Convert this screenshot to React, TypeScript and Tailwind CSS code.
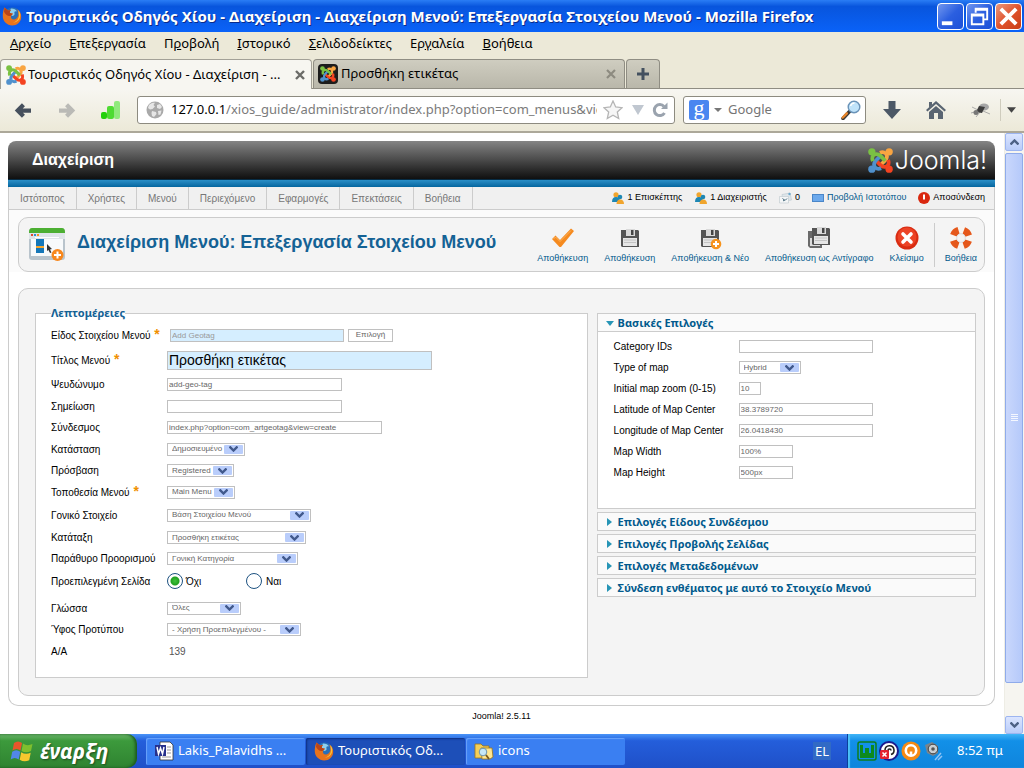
import { clsx } from 'clsx';
import type { ReactNode } from 'react';

type IconProps = { className?: string };

/* ---------- Icons ---------- */

function JoomlaMark({ className }: IconProps) {
  const arm = 'M4.6 12.600 C3.400 9.600 4.200 6.800 6.800 6 C9 5.400 10.600 6.200 12 7.600 L16.600 12.200';
  return (
    <svg viewBox="0 0 24 24" className={className} fill="none" strokeWidth="3.600" aria-hidden="true">
      <g stroke="#f9a541" fill="#f9a541" transform="rotate(90 12 12)">
        <path d={arm} fill="none" />
        <circle cx="3.700" cy="3.700" r="3.500" stroke="none" />
      </g>
      <g stroke="#f44321" fill="#f44321" transform="rotate(180 12 12)">
        <path d={arm} fill="none" />
        <circle cx="3.700" cy="3.700" r="3.500" stroke="none" />
      </g>
      <g stroke="#5091cd" fill="#5091cd" transform="rotate(270 12 12)">
        <path d={arm} fill="none" />
        <circle cx="3.700" cy="3.700" r="3.500" stroke="none" />
      </g>
      <g stroke="#7ac143" fill="#7ac143">
        <path d={arm} fill="none" />
        <circle cx="3.700" cy="3.700" r="3.500" stroke="none" />
      </g>
    </svg>
  );
}

function FirefoxIcon({ className }: IconProps) {
  return (
    <svg viewBox="0 0 20 20" className={className} aria-hidden="true">
      <circle cx="10.5" cy="9.5" r="8" fill="#2a6fb8" />
      <path d="M9 2.5c3 0 5 1 6 3-2-.6-3 .4-2.500 2 .4 1.300-.8 2.500-2.500 2.500L7 7z" fill="#8fd0ee" />
      <path
        d="M2.500 1.500 6 4.500l3-.6C8 5 7.600 6 8 7l3 .8-2 2c-.6 2.400 1 4 3.400 3.600 2.600-.4 4-2.600 4-5.400 0-2-.6-3.600-1.600-5 3 2 4.700 4.800 4.400 8.400-.4 4.700-4.200 8-9 8C5 19.400 1 15.600.8 10.600.7 7.400 1.200 4.200 2.500 1.500z"
        fill="#e8731c"
      />
      <path d="M2.500 1.500 6 4.500l3-.6C8 5 7.600 6 8 7l3 .8-2 2c-3 1-5.500-1-7-4z" fill="#b8441a" />
      <path d="M16.400 4c2 2.400 2.400 5.400 1.400 8-1.200 3-4 4.700-7 4.500 3.500-.6 6-3.200 6.200-7z" fill="#fbc63a" />
    </svg>
  );
}

function GlobeIcon({ className }: IconProps) {
  return (
    <svg viewBox="0 0 18 18" className={className} aria-hidden="true">
      <circle cx="9" cy="9" r="8.500" fill="#a9a9a9" />
      <path d="M3 4c2-2 4-2.500 6-2.200L7.500 4 9 5.500 6.500 8 4 8.500 2 7zM11 4l3-1 2 3-2 2-3-1zM6 10l4 1 .5 2L8 16l-2-1-.5-3zM12 10l3.500-.5-1 4-2 .5z" fill="#e6e6e6" />
    </svg>
  );
}

function Floppy({ className, badge, stacked }: IconProps & { badge?: boolean; stacked?: boolean }) {
  return (
    <svg viewBox="0 0 24 24" className={className} aria-hidden="true">
      {stacked && (
        <>
          <path d="M1 5h14v17H3l-2-2z" fill="#6a6a6a" />
          <path d="M3 12h10v8H3z" fill="#ddd" />
        </>
      )}
      <g transform={stacked ? 'translate(2 -2)' : undefined}>
        <path d="M3 4h17l1 1v16H4l-1-1z" fill="#555" />
        <path d="M8 3h9v7H8z" fill="#d9d9d9" />
        <path d="M13 4h2.500v5H13z" fill="#444" />
        <path d="M5 12h14v8H5z" fill="#e6e6e6" />
        <path d="M6 14h12M6 16.500h12" stroke="#c4c4c4" />
      </g>
      {badge && (
        <>
          <circle cx="18" cy="18" r="5.300" fill="#f7941d" />
          <path d="M18 15v6M15 18h6" stroke="#fff" strokeWidth="2" />
        </>
      )}
    </svg>
  );
}

function CheckIcon({ className }: IconProps) {
  return (
    <svg viewBox="0 0 24 24" className={className} aria-hidden="true">
      <path d="M1 13 4.500 9.500 9 14 20 2.500 23 5 10 21 8.500 21z" fill="#f58a1f" />
      <path d="M2.500 13 4.500 11 9 15.500 20 4.500" fill="none" stroke="#fbb35c" />
    </svg>
  );
}

function CloseIcon({ className }: IconProps) {
  return (
    <svg viewBox="0 0 24 24" className={className} aria-hidden="true">
      <circle cx="12" cy="12" r="11.500" fill="#d92c12" />
      <circle cx="12" cy="11" r="9.500" fill="#ec4326" />
      <path d="m8 8 8 8m0-8-8 8" stroke="#fff" strokeWidth="3.600" strokeLinecap="round" />
    </svg>
  );
}

function LifebuoyIcon({ className }: IconProps) {
  return (
    <svg viewBox="0 0 24 24" className={className} fill="none" aria-hidden="true">
      <circle cx="12" cy="12" r="8" stroke="#f8f4f0" strokeWidth="7" />
      <circle cx="12" cy="12" r="8" stroke="#e5581b" strokeWidth="7" strokeDasharray="7.200 5.366" transform="rotate(19 12 12)" />
      <circle cx="12" cy="12" r="4.300" fill="#f4f4f4" stroke="#ddd" />
    </svg>
  );
}

function MenuItemIcon({ className }: IconProps) {
  return (
    <svg viewBox="0 0 36 36" className={className} aria-hidden="true">
      <rect y="2" width="36" height="31" rx="3" fill="#b9c4cc" />
      <path d="M0 5q0-4 3-4h30q3 0 3 4v1H0z" fill="#4caf32" />
      <path d="M0 6h36v6H0z" fill="#dfe5e9" />
      <path d="M2 7h2v2H2z" fill="#e04a2f" />
      <path d="M5 7h2v2H5z" fill="#2f8fd0" />
      <path d="M8 7h2v2H8z" fill="#f7941d" />
      <path d="M6 10h24v1H6z" fill="#fff" />
      <path d="M2 12h32v17H2z" fill="#f8fafb" />
      <path d="M7 12h8v14H7z" fill="#1577b8" />
      <path d="M7 19h8v2H7z" fill="#f9a72b" />
      <path d="m18 17 5 5-2 .5 1.500 3-1.500.5-1.500-3L18 24z" fill="#333" />
      <circle cx="28.500" cy="28" r="6" fill="#f7871d" />
      <path d="M28.500 24.500v7M25 28h7" stroke="#fff" strokeWidth="2" />
    </svg>
  );
}

function PeopleIcon({ className }: IconProps) {
  return (
    <svg viewBox="0 0 13 12" className={className} aria-hidden="true">
      <circle cx="5" cy="2.800" r="2.600" fill="#f0a52e" />
      <path d="M1 10q0-5 4-5t4 5z" fill="#1d87b4" />
      <circle cx="9" cy="5" r="2.300" fill="#1d87b4" />
      <path d="M5.500 12q0-4.500 3.700-4.500T13 12z" fill="#f0a52e" />
    </svg>
  );
}

function MessagesIcon({ className }: IconProps) {
  return (
    <svg viewBox="0 0 13 12" className={className} aria-hidden="true">
      <path d="M3 2.500 11 1l1.500 7L4 9.500z" fill="#dfe6ea" stroke="#b9c6ce" strokeWidth=".6" />
      <path d="M.5 4.500h9v6.500h-9z" fill="#f4f6f7" stroke="#bcc7cd" strokeWidth=".6" />
      <path d="M3.500 6.500 6 8.500l2-2M4 9l1.500-1" fill="none" stroke="#466a7c" />
      <circle cx="10.500" cy="2" r="1.200" fill="#6aa8cc" />
    </svg>
  );
}

function MagnifierIcon({ className }: IconProps) {
  return (
    <svg viewBox="0 0 20 20" className={className} aria-hidden="true">
      <path d="m2 18.500 6.500-7" stroke="#3a3a3a" strokeWidth="3.500" strokeLinecap="round" />
      <path d="m1.800 17.500 4-4.200" stroke="#e8852a" strokeWidth="2.500" strokeLinecap="round" />
      <circle cx="13" cy="7" r="5.800" fill="#bfe3fa" stroke="#6a93b8" strokeWidth="1.400" />
      <path d="M9.500 6q1-3 4-3" stroke="#fff" strokeWidth="1.500" fill="none" />
    </svg>
  );
}

function WindowsFlag({ className }: IconProps) {
  return (
    <svg viewBox="0 0 24 22" className={className} aria-hidden="true">
      <path d="M4 3q4-3 8 0l-1.500 7.500q-4-3-8 0z" fill="#e9562b" />
      <path d="M13 3.500q4 3 9.500.5L21 11q-5 2.500-9.500 0z" fill="#7fbf2e" />
      <path d="M2.200 11.700q4-3 8 0L8.700 19.500q-4-3-8 0z" fill="#5187e8" />
      <path d="M11.200 12.200q4.500 3 9.500.5l-1.500 7.500q-5 2.500-9.500-.5z" fill="#f8c82e" />
    </svg>
  );
}

/* ---------- Browser chrome ---------- */

function WindowButton({ label, red, children }: { label: string; red?: boolean; children: ReactNode }) {
  return (
    <button
      aria-label={label}
      className={clsx(
        'flex size-[27px] items-center justify-center rounded-[4px] border border-white bg-linear-to-br',
        red ? 'from-[#e9977c] via-[#e0532c] to-[#c83c14]' : 'from-[#7296ee] via-[#2b5fe0] to-[#1c50d8]'
      )}
    >
      <svg viewBox="0 0 26 26" className="size-full" fill="none" stroke="#fff" aria-hidden="true">
        {children}
      </svg>
    </button>
  );
}

function TitleBar() {
  return (
    <header className="flex h-8 items-center gap-1 bg-linear-to-b from-[#2a7df5] via-[#0855dd] via-20% to-[#0a62f8] pr-0.5 pl-0.5">
      <FirefoxIcon className="size-5 shrink-0" />
      <h1 className="flex-1 truncate font-['Noto_Sans',sans-serif] text-[15px] font-bold text-white [text-shadow:1px_1px_0_#0a2a8a]">
        Τουριστικός Οδηγός Χίου - Διαχείριση - Διαχείριση Μενού: Επεξεργασία Στοιχείου Μενού - Mozilla Firefox
      </h1>
      <div className="flex gap-0.5">
        <WindowButton label="Ελαχιστοποίηση">
          <path d="M4 20h11" strokeWidth="4" />
        </WindowButton>
        <WindowButton label="Επαναφορά">
          <path d="M9 9V5h12v11h-4M9 6h12" strokeWidth="2" />
          <path d="M5 11h12v10H5zM5 12h12" strokeWidth="2" />
        </WindowButton>
        <WindowButton label="Κλείσιμο παραθύρου" red>
          <path d="m5 5 16 16m0-16L5 21" strokeWidth="4" />
        </WindowButton>
      </div>
    </header>
  );
}

const BROWSER_MENU = [
  ['', 'Α', 'ρχείο'],
  ['', 'Ε', 'πεξεργασία'],
  ['Π', 'ρ', 'οβολή'],
  ['', 'Ι', 'στορικό'],
  ['', 'Σ', 'ελιδοδείκτες'],
  ['Ερ', 'γ', 'αλεία'],
  ['', 'Β', 'οήθεια'],
];

function BrowserMenu() {
  return (
    <nav className="flex h-[27px] items-center gap-[18px] px-2.5 pb-1 text-[13px] text-black">
      {BROWSER_MENU.map(([before, key, after]) => (
        <button key={before + key + after}>
          {before}
          <u>{key}</u>
          {after}
        </button>
      ))}
    </nav>
  );
}

function TabStrip() {
  return (
    <div className="flex h-[30px] items-stretch border-b border-[#8f8d83] text-[13px] text-black">
      <div className="-mb-px flex w-[312px] items-center gap-0.5 rounded-t-[4px] border border-b-0 border-[#a3a197] bg-[#f7f6f1] pr-1.5 pl-[5px]">
        <JoomlaMark className="size-5" />
        <button className="flex-1 truncate text-left">Τουριστικός Οδηγός Χίου - Διαχείριση - ...</button>
        <button aria-label="Κλείσιμο καρτέλας">
          <svg viewBox="0 0 10 10" className="size-2.5" stroke="#6b6b68" strokeWidth="2.400">
            <path d="m1 1 8 8m0-8L1 9" />
          </svg>
        </button>
      </div>
      <div className="ml-px flex w-[312px] items-center gap-[3px] rounded-t-[4px] border border-b-0 border-[#8f8d83] bg-linear-to-b from-[#cfcdc0] to-[#b9b7aa] pr-2 pl-1">
        <span className="flex size-5 items-center justify-center rounded-[4px] bg-[#1c1c1c]">
          <JoomlaMark className="size-4" />
        </span>
        <button className="flex-1 truncate text-left">Προσθήκη ετικέτας</button>
        <button aria-label="Κλείσιμο καρτέλας">
          <svg viewBox="0 0 10 10" className="size-2.5" stroke="#8d8b80" strokeWidth="2.200">
            <path d="m1 1 8 8m0-8L1 9" />
          </svg>
        </button>
      </div>
      <button
        aria-label="Νέα καρτέλα"
        className="ml-px flex w-[34px] items-center justify-center rounded-t-[4px] border border-b-0 border-[#8f8d83] bg-linear-to-b from-[#cfcdc0] to-[#b9b7aa]"
      >
        <svg viewBox="0 0 14 14" className="size-3.5" stroke="#43505f" strokeWidth="3">
          <path d="M7 1v12M1 7h12" />
        </svg>
      </button>
    </div>
  );
}

function NavigationBar() {
  return (
    <div className="flex h-[44px] items-center border-b-2 border-[#aca899] bg-linear-to-b from-[#f7f6f1] to-[#ece9d8] text-[13px]">
      <button aria-label="Πίσω" className="ml-3.5">
        <svg viewBox="0 0 18 18" className="size-[17px]" fill="none" stroke="#46505d" strokeWidth="4.500">
          <path d="M10 3 4 9l6 6M4 9h14" />
        </svg>
      </button>
      <button aria-label="Εμπρός" className="ml-7">
        <svg viewBox="0 0 18 18" className="size-[17px]" fill="none" stroke="#babab6" strokeWidth="4.500">
          <path d="m8 3 6 6-6 6M14 9H0" />
        </svg>
      </button>
      <svg viewBox="0 0 20 18" className="ml-[25px] h-[18px] w-5" aria-hidden="true">
        <rect y="11" width="6" height="7" rx="2" fill="#22d00a" />
        <rect x="6" y="5" width="7" height="13" rx="2" fill="#4edb32" />
        <rect x="13" width="6" height="18" rx="2" fill="#90ea7c" />
      </svg>
      <div className="ml-4 flex h-7 min-w-0 flex-1 items-center rounded-[3px] border border-[#8d8b80] bg-white pr-1.5 pl-2">
        <GlobeIcon className="size-[18px] shrink-0" />
        <label htmlFor="address" className="ml-[7px] text-black">
          127.0.0.1
        </label>
        <input
          id="address"
          defaultValue="/xios_guide/administrator/index.php?option=com_menus&view=item"
          className="min-w-0 flex-1 bg-transparent text-[#7b7b7b] outline-none"
        />
        <svg viewBox="0 0 20 20" className="ml-1.5 size-5 shrink-0" fill="#f6f6f6" stroke="#b5b5b5" strokeWidth="1.300">
          <path d="m10 1 2.700 6 6.300.7-4.700 4.300 1.400 6.500L10 15.300 4.300 18.500 5.700 12 1 7.700 7.300 7z" />
        </svg>
        <svg viewBox="0 0 12 10" className="ml-[9px] h-2.5 w-3 shrink-0" fill="#c0c7d0">
          <path d="M0 0h12L6 10z" />
        </svg>
        <svg viewBox="0 0 16 16" className="ml-2 size-4 shrink-0" fill="none" stroke="#9aa3ae" strokeWidth="3">
          <path d="M12.500 11A5.500 5.500 0 1 1 12 4.500" />
          <path d="M9 7h6.500V.5z" fill="#9aa3ae" stroke="none" />
        </svg>
      </div>
      <div className="ml-2 flex h-7 w-[183px] items-center rounded-[3px] border border-[#8d8b80] bg-white pr-1 pl-[5px]">
        <span className="flex size-5 shrink-0 items-center justify-center rounded-[2px] bg-[#4a86f0] pb-1 font-['Liberation_Serif',serif] text-[22px] leading-5 text-white">
          g
        </span>
        <svg viewBox="0 0 8 4" className="ml-[5px] h-1 w-2 shrink-0" fill="#777">
          <path d="M0 0h8L4 4z" />
        </svg>
        <input
          aria-label="Αναζήτηση"
          placeholder="Google"
          className="ml-1.5 min-w-0 flex-1 bg-transparent outline-none placeholder:text-[#757575]"
        />
        <MagnifierIcon className="size-5 shrink-0" />
      </div>
      <svg viewBox="0 0 18 18" className="ml-[17px] size-[18px]" fill="#4c5866" aria-hidden="true">
        <path d="M5.500 0h7v8H18l-9 10L0 8h5.500z" />
      </svg>
      <svg viewBox="0 0 20 18" className="ml-[25px] h-[18px] w-5" fill="#5a6572" aria-hidden="true">
        <path d="M10 0 20 9l-1.500 1.500L10 3 1.500 10.500 0 9zM3 11l7-6 7 6v7h-5v-6H8v6H3z" />
        <path d="M3 1h3v3L3 6.500z" />
      </svg>
      <svg viewBox="0 0 22 16" className="ml-6 h-4 w-[22px]" aria-hidden="true">
        <path d="M2 5l6 3M1 11l7-2M6 15l4-5M12 2l-2 5M20 12l-7-3" stroke="#999" strokeWidth=".8" />
        <ellipse cx="14" cy="5" rx="5" ry="3.500" fill="#a6a6a6" />
        <path d="m9 4 6 1-3 6-6-1z" fill="#3d3d3d" />
        <circle cx="6" cy="10.500" r="2.500" fill="#777" />
      </svg>
      <span className="mr-1.5 ml-2 h-[22px] w-px bg-[#cfccbd]" />
      <svg viewBox="0 0 10 6" className="mr-2 h-1.5 w-[9px]" fill="#444" aria-hidden="true">
        <path d="M0 0h10L5 6z" />
      </svg>
    </div>
  );
}

function ScrollBar() {
  const button =
    'flex h-[18px] items-center justify-center rounded-[2px] border border-[#9db5f0] bg-linear-to-b from-[#dbe5ff] to-[#b9ccf9]';
  return (
    <div className="flex w-5 shrink-0 flex-col border-l border-[#eeede5] bg-[#f6f5f0] pr-px">
      <button aria-label="Κύλιση πάνω" className={button}>
        <svg viewBox="0 0 9 6" className="h-1.5 w-[9px]" fill="none" stroke="#4d6185" strokeWidth="2.400">
          <path d="m.5 5.500 4-4 4 4" />
        </svg>
      </button>
      <div className="mt-0.5 flex h-[530px] items-center justify-center rounded-[2px] border border-[#8fabea] bg-linear-to-r from-[#c9d7fc] to-[#b5c9fa]">
        <svg viewBox="0 0 7 8" className="h-2 w-[7px]" stroke="#f4f7ff" aria-hidden="true">
          <path d="M0 .5h7M0 2.500h7M0 4.500h7M0 6.500h7" />
        </svg>
      </div>
      <button aria-label="Κύλιση κάτω" className={clsx(button, 'mt-auto')}>
        <svg viewBox="0 0 9 6" className="h-1.5 w-[9px]" fill="none" stroke="#4d6185" strokeWidth="2.400">
          <path d="m.5.5 4 4 4-4" />
        </svg>
      </button>
    </div>
  );
}

/* ---------- Administrator page ---------- */

const ADMIN_MENU = ['Ιστότοπος', 'Χρήστες', 'Μενού', 'Περιεχόμενο', 'Εφαρμογές', 'Επεκτάσεις', 'Βοήθεια'];

function AdminHeader() {
  return (
    <>
      <div className="flex h-[38px] items-center justify-between rounded-t-[8px] bg-linear-to-b from-[#858585] via-[#4a4a4a] to-[#101010] pr-2 pl-6">
        <span className="text-[16px] font-bold text-white">Διαχείριση</span>
        <a href="#joomla" className="flex items-center gap-0.5 text-white">
          <JoomlaMark className="size-[25px]" />
          <span className="font-['Inter',sans-serif] text-[25px] leading-7 font-light">Joomla!</span>
        </a>
      </div>
      <div className="h-2 border-t border-[#062c45] bg-linear-to-b from-[#2a8fc7] to-[#03669f]" />
      <div className="flex h-[23px] items-stretch justify-between border-x border-b border-[#ccc] bg-[#f0f0f0] pr-[9px] text-[9px]">
        <nav className="flex">
          {ADMIN_MENU.map((item) => (
            <a key={item} href="#menu" className="flex items-center border-r border-[#ccc] px-[11px] text-[10px] text-[#777]">
              {item}
            </a>
          ))}
        </nav>
        <div className="flex items-center gap-3 text-black">
          <span className="flex items-center gap-[3px]">
            <PeopleIcon className="h-3 w-[13px]" />1 Επισκέπτης
          </span>
          <span className="flex items-center gap-[3px]">
            <PeopleIcon className="h-3 w-[13px]" />1 Διαχειριστής
          </span>
          <span className="flex items-center gap-[3px]">
            <MessagesIcon className="h-3 w-[13px]" />0
          </span>
          <a href="#site" className="flex items-center gap-[3px] text-[#025a8d]">
            <span className="h-2 w-3 border border-[#4a86c8] bg-[#6ca9ec]" />
            Προβολή Ιστοτόπου
          </a>
          <a href="#logout" className="flex items-center gap-[3px]">
            <svg viewBox="0 0 12 12" className="size-3" aria-hidden="true">
              <circle cx="6" cy="6" r="6" fill="#d9280f" />
              <path d="M6 2.500v5" stroke="#fff" strokeWidth="2" />
            </svg>
            Αποσύνδεση
          </a>
        </div>
      </div>
    </>
  );
}

function ToolButton({ label, children }: { label: string; children: ReactNode }) {
  return (
    <button className="flex flex-col items-center gap-0.5 text-[9px] leading-3 whitespace-nowrap text-[#025a8d]">
      {children}
      {label}
    </button>
  );
}

function Toolbar() {
  return (
    <div className="bg-[#fbfbfb] px-[9px] pt-[7px]">
      <div className="flex h-[55px] items-center rounded-[10px] border border-[#ccc] bg-[#f4f4f4] pr-[7px] pl-2.5">
        <MenuItemIcon className="size-9 shrink-0" />
        <h2 className="ml-3 flex-1 pb-1 text-[18px] font-bold whitespace-nowrap text-[#146295]">
          Διαχείριση Μενού: Επεξεργασία Στοιχείου Μενού
        </h2>
        <div className="flex items-center gap-4">
          <ToolButton label="Αποθήκευση">
            <CheckIcon className="size-6" />
          </ToolButton>
          <ToolButton label="Αποθήκευση">
            <Floppy className="size-6" />
          </ToolButton>
          <ToolButton label="Αποθήκευση & Νέο">
            <Floppy className="size-6" badge />
          </ToolButton>
          <ToolButton label="Αποθήκευση ως Αντίγραφο">
            <Floppy className="size-6" stacked />
          </ToolButton>
          <ToolButton label="Κλείσιμο">
            <CloseIcon className="size-6" />
          </ToolButton>
        </div>
        <div className="ml-2.5 flex h-11 items-center border-l border-[#ccc] pl-2.5">
          <ToolButton label="Βοήθεια">
            <LifebuoyIcon className="size-6" />
          </ToolButton>
        </div>
      </div>
    </div>
  );
}

const CONTROL = 'border border-[#c0c0c0] bg-white text-[8px] text-[#666]';

function TextField({ id, value = '', className }: { id: string; value?: string; className: string }) {
  return <input id={id} defaultValue={value} className={clsx(CONTROL, 'h-[13px] px-px', className)} />;
}

function SelectField({ id, value, className }: { id: string; value: string; className: string }) {
  return (
    <span className={clsx('relative inline-block h-[13px]', className)}>
      <select id={id} className={clsx(CONTROL, 'block h-full w-full appearance-none pl-1 leading-[10px]')}>
        <option>{value}</option>
      </select>
      <span className="pointer-events-none absolute top-0.5 right-0.5 flex h-[9px] w-[19px] items-center justify-center rounded-[1px] bg-[#b9cdfb]">
        <svg viewBox="0 0 9 6" className="h-1.5 w-[9px]" fill="none" stroke="#41598c" strokeWidth="2.400" aria-hidden="true">
          <path d="m.5.5 4 4 4-4" />
        </svg>
      </span>
    </span>
  );
}

type RowProps = { id?: string; label: string; required?: boolean; size?: string; children: ReactNode };

function Row({ id, label, required, size = 'h-[22px]', children }: RowProps) {
  return (
    <li className={clsx('flex items-center', size)}>
      <label htmlFor={id} className="w-[116px] shrink-0 text-[10px] whitespace-nowrap text-black">
        {label}
        {required && <span className="text-[14px] leading-3 font-bold text-[#f09000]"> *</span>}
      </label>
      {children}
    </li>
  );
}

const RADIO =
  'size-4 appearance-none rounded-full border border-[#1d5281] bg-white checked:bg-[radial-gradient(circle,#3fc23c_0,#21a121_4px,#fff_5px)]';

function DetailsForm() {
  return (
    <fieldset className="h-[371px] border border-[#ccc] bg-white pl-[15px]">
      <legend className="font-['Noto_Sans',sans-serif] text-[11px] leading-3 font-bold text-[#146295]">
        Λεπτομέρειες
      </legend>
      <ul className="mt-[5px]">
        <Row id="type" label="Είδος Στοιχείου Μενού" required>
          <input
            id="type"
            defaultValue="Add Geotag"
            className="ml-[3px] h-[13px] w-[174px] border border-[#c0c0c0] bg-[#d5eeff] px-px text-[8px] text-[#999]"
          />
          <button className="ml-1 h-[13px] w-[45px] border border-[#c0c0c0] bg-white text-[8px] leading-[10px] text-[#666]">
            Επιλογή
          </button>
        </Row>
        <Row id="title" label="Τίτλος Μενού" required size="h-7">
          <input
            id="title"
            defaultValue="Προσθήκη ετικέτας"
            className="h-[19px] w-[265px] border border-[#c0c0c0] bg-[#d5eeff] px-px text-[14px] text-black"
          />
        </Row>
        <Row id="alias" label="Ψευδώνυμο" size="h-[21px]">
          <TextField id="alias" value="add-geo-tag" className="w-[175px]" />
        </Row>
        <Row id="note" label="Σημείωση">
          <TextField id="note" className="w-[175px]" />
        </Row>
        <Row id="link" label="Σύνδεσμος" size="h-[21px]">
          <TextField id="link" value="index.php?option=com_artgeotag&view=create" className="w-[215px]" />
        </Row>
        <Row id="state" label="Κατάσταση">
          <SelectField id="state" value="Δημοσιευμένο" className="w-[78px]" />
        </Row>
        <Row id="access" label="Πρόσβαση" size="h-[21px]">
          <SelectField id="access" value="Registered" className="w-[67px]" />
        </Row>
        <Row id="location" label="Τοποθεσία Μενού" required>
          <SelectField id="location" value="Main Menu" className="w-[68px]" />
        </Row>
        <Row id="parent" label="Γονικό Στοιχείο" size="h-6">
          <SelectField id="parent" value="Βάση Στοιχείου Μενού" className="w-[144px]" />
        </Row>
        <Row id="ordering" label="Κατάταξη" size="h-[21px]">
          <SelectField id="ordering" value="Προσθήκη ετικέτας" className="w-[139px]" />
        </Row>
        <Row id="target" label="Παράθυρο Προορισμού" size="h-[21px]">
          <SelectField id="target" value="Γονική Κατηγορία" className="w-[131px]" />
        </Row>
        <Row id="home-no" label="Προεπιλεγμένη Σελίδα" size="h-6">
          <label className="flex w-[79px] items-center gap-[3px] text-[10px] text-black">
            <input id="home-no" type="radio" name="home" defaultChecked className={RADIO} />
            Όχι
          </label>
          <label className="flex items-center gap-1 text-[10px] text-black">
            <input type="radio" name="home" className={RADIO} />
            Ναι
          </label>
        </Row>
        <Row id="language" label="Γλώσσα" size="mt-1 h-[22px]">
          <SelectField id="language" value="Όλες" className="w-[74px]" />
        </Row>
        <Row id="style" label="Ύφος Προτύπου" size="h-[21px]">
          <SelectField id="style" value="- Χρήση Προεπιλεγμένου -" className="w-[134px]" />
        </Row>
        <Row label="Α/Α">
          <output className="pl-0.5 text-[10px] text-[#555]">139</output>
        </Row>
      </ul>
    </fieldset>
  );
}

function OptionRow({ id, label, children }: { id: string; label: string; children: ReactNode }) {
  return (
    <li className="flex h-[21px] items-center">
      <label htmlFor={id} className="w-[125px] shrink-0 text-[10px] whitespace-nowrap text-black">
        {label}
      </label>
      {children}
    </li>
  );
}

function PanelTitle({ title, open }: { title: string; open?: boolean }) {
  return (
    <h3 className="bg-[#fafafa]">
      <button
        aria-expanded={!!open}
        className="flex h-[17px] w-full items-center gap-1 pl-2 font-['Noto_Sans',sans-serif] text-[11px] leading-3 font-bold text-[#025a8d]"
      >
        <svg viewBox="0 0 8 8" className="size-2" fill="#2795b6" aria-hidden="true">
          <path d={open ? 'M0 2h8L4 7z' : 'M1 0v8l5-4z'} />
        </svg>
        {title}
      </button>
    </h3>
  );
}

const CLOSED_PANELS = [
  'Επιλογές Είδους Συνδέσμου',
  'Επιλογές Προβολής Σελίδας',
  'Επιλογές Μεταδεδομένων',
  'Σύνδεση ενθέματος με αυτό το Στοιχείο Μενού',
];

function OptionPanels() {
  return (
    <div className="flex flex-col gap-[3px] pt-1.5">
      <section className="border border-[#ccc] bg-white">
        <PanelTitle title="Βασικές Επιλογές" open />
        <ul className="border-t border-[#ccc] pt-1 pb-[25px] pl-4">
          <OptionRow id="cat" label="Category IDs">
            <TextField id="cat" className="w-[134px]" />
          </OptionRow>
          <OptionRow id="maptype" label="Type of map">
            <SelectField id="maptype" value="Hybrid" className="w-[62px]" />
          </OptionRow>
          <OptionRow id="zoom" label="Initial map zoom (0-15)">
            <TextField id="zoom" value="10" className="w-[22px]" />
          </OptionRow>
          <OptionRow id="lat" label="Latitude of Map Center">
            <TextField id="lat" value="38.3789720" className="w-[134px]" />
          </OptionRow>
          <OptionRow id="lng" label="Longitude of Map Center">
            <TextField id="lng" value="26.0418430" className="w-[134px]" />
          </OptionRow>
          <OptionRow id="width" label="Map Width">
            <TextField id="width" value="100%" className="w-[54px]" />
          </OptionRow>
          <OptionRow id="height" label="Map Height">
            <TextField id="height" value="500px" className="w-[54px]" />
          </OptionRow>
        </ul>
      </section>
      {CLOSED_PANELS.map((title) => (
        <section key={title} className="border border-[#ccc]">
          <PanelTitle title={title} />
        </section>
      ))}
    </div>
  );
}

/* ---------- Taskbar ---------- */

function TaskButton({ label, active, children }: { label: string; active?: boolean; children: ReactNode }) {
  return (
    <button
      className={clsx(
        'flex h-[27px] w-[159px] items-center gap-1 rounded-[2px] pl-2 text-[13px] whitespace-nowrap text-white',
        active ? 'bg-[#1d4fb8] shadow-[inset_1px_1px_2px_#0d2f80]' : 'bg-[#3a7ff2] shadow-[inset_1px_1px_1px_#6ba3fb]'
      )}
    >
      {children}
      {label}
    </button>
  );
}

function Taskbar() {
  return (
    <footer className="flex h-[34px] items-center bg-linear-to-b from-[#4a94f8] via-[#245edb] via-20% to-[#1f50c8]">
      <button className="flex h-full w-[137px] items-center gap-1.5 rounded-r-[10px] bg-linear-to-b from-[#6bb56b] via-[#3c9a3c] via-20% to-[#2f8331] pl-2.5 shadow-[inset_-2px_0_3px_#1c5a1e]">
        <WindowsFlag className="h-[22px] w-6" />
        <span className="font-['Noto_Sans',sans-serif] text-[21px] leading-6 font-bold text-white italic [text-shadow:1px_1px_2px_#1c4a1e]">
          έναρξη
        </span>
      </button>
      <div className="ml-[9px] flex gap-px">
        <TaskButton label="Lakis_Palavidhs ...">
          <svg viewBox="0 0 20 20" className="size-5" aria-hidden="true">
            <path d="M6 1h10l3 3v15H6z" fill="#fff" stroke="#333" strokeWidth=".8" />
            <path d="M13 6h4M13 9h4M13 12h4M8 16h9" stroke="#999" />
            <path d="M1 4h11v11H1z" fill="#26318c" />
            <path d="m3 6 1.500 7L6.500 7l2 6L10 6" fill="none" stroke="#fff" strokeWidth="1.500" />
          </svg>
        </TaskButton>
        <TaskButton label="Τουριστικός Οδ..." active>
          <FirefoxIcon className="size-5" />
        </TaskButton>
        <TaskButton label="icons">
          <svg viewBox="0 0 20 20" className="size-5" aria-hidden="true">
            <path d="M1 3h6l2 2h6v12H1z" fill="#f3cf5b" stroke="#9c7417" strokeWidth=".8" />
            <path d="M7 7h11l1 9-3 2H8z" fill="#ffe690" stroke="#9c7417" strokeWidth=".8" />
            <circle cx="9" cy="11" r="3.800" fill="#c5e7f7" stroke="#6b93ab" />
            <path d="m12 14 3 4" stroke="#7a5a1a" strokeWidth="1.800" />
          </svg>
        </TaskButton>
      </div>
      <span className="mr-4 ml-auto bg-[#316ac5] px-0.5 py-px text-[13px] leading-4 text-white">EL</span>
      <div className="flex h-full w-[177px] items-center gap-0.5 border-l border-[#0b3f9c] bg-linear-to-b from-[#3fb4f6] via-[#1290e8] via-20% to-[#0f85dc] pl-[9px] shadow-[inset_2px_0_1px_#4cc0f8]">
        <svg viewBox="0 0 20 20" className="size-5" aria-hidden="true">
          <rect x="1" y="1" width="18" height="18" rx="2" fill="#1290e8" stroke="#0c7d1c" strokeWidth="1.500" />
          <path d="M3 4h3v8h2V7h4v5h2V4h3v13H3z" fill="#0c8a1e" />
        </svg>
        <svg viewBox="0 0 20 20" className="size-5" aria-hidden="true">
          <circle cx="10" cy="10" r="9" fill="#fff" stroke="#1b1b8e" strokeWidth="2" />
          <path d="M6 11V9a4.500 4.500 0 1 1 6 4.500M9 12V9.500a1.500 1.500 0 0 1 3 0" fill="none" stroke="#222" strokeWidth="1.600" />
          <rect x="1" y="9" width="9" height="9" rx="1.500" fill="#e3202c" />
          <path d="m3.500 11.500 4 4m0-4-4 4" stroke="#fff" strokeWidth="1.500" />
        </svg>
        <svg viewBox="0 0 20 20" className="size-5" aria-hidden="true">
          <circle cx="10" cy="10" r="9.500" fill="#f58a14" />
          <circle cx="10" cy="9.500" r="5.200" fill="none" stroke="#fff" strokeWidth="2.600" />
          <path d="M10 15v-4.500" stroke="#fff" strokeWidth="2.600" />
        </svg>
        <svg viewBox="0 0 20 20" className="size-5" aria-hidden="true">
          <path d="M2 4 9 1l6 4v7l-5 3-6-3z" fill="#7b848c" />
          <circle cx="10" cy="8" r="4.800" fill="#c9ced2" stroke="#444" />
          <circle cx="10" cy="8" r="1.800" fill="#555" />
          <path d="m12 19 6-7M15 19l4-4" stroke="#8fc3f5" strokeWidth="1.500" />
        </svg>
        <time className="ml-3 text-[13px] text-white">8:52 πμ</time>
      </div>
    </footer>
  );
}

export default function App() {
  return (
    <div className="flex min-h-screen flex-col bg-[#ece9d8] font-['Noto_Sans',sans-serif]">
      <TitleBar />
      <BrowserMenu />
      <TabStrip />
      <NavigationBar />
      <div className="flex flex-1 bg-white">
        <main className="min-w-0 flex-1 pt-2 pr-[9px] pl-2 font-['Liberation_Sans',sans-serif]">
          <AdminHeader />
          <div className="rounded-b-[10px] border border-t-0 border-[#ccc] pb-[9px]">
            <Toolbar />
            <div className="mx-[9px] mt-4 grid h-[408px] grid-cols-[552fr_379fr] items-start gap-[9px] rounded-[10px] border border-[#ccc] bg-[#f4f4f4] pt-[18px] pr-2 pl-4">
              <DetailsForm />
              <OptionPanels />
            </div>
          </div>
          <p className="mt-1 text-center text-[9px] leading-3 text-black">Joomla! 2.5.11</p>
        </main>
        <ScrollBar />
      </div>
      <Taskbar />
    </div>
  );
}
